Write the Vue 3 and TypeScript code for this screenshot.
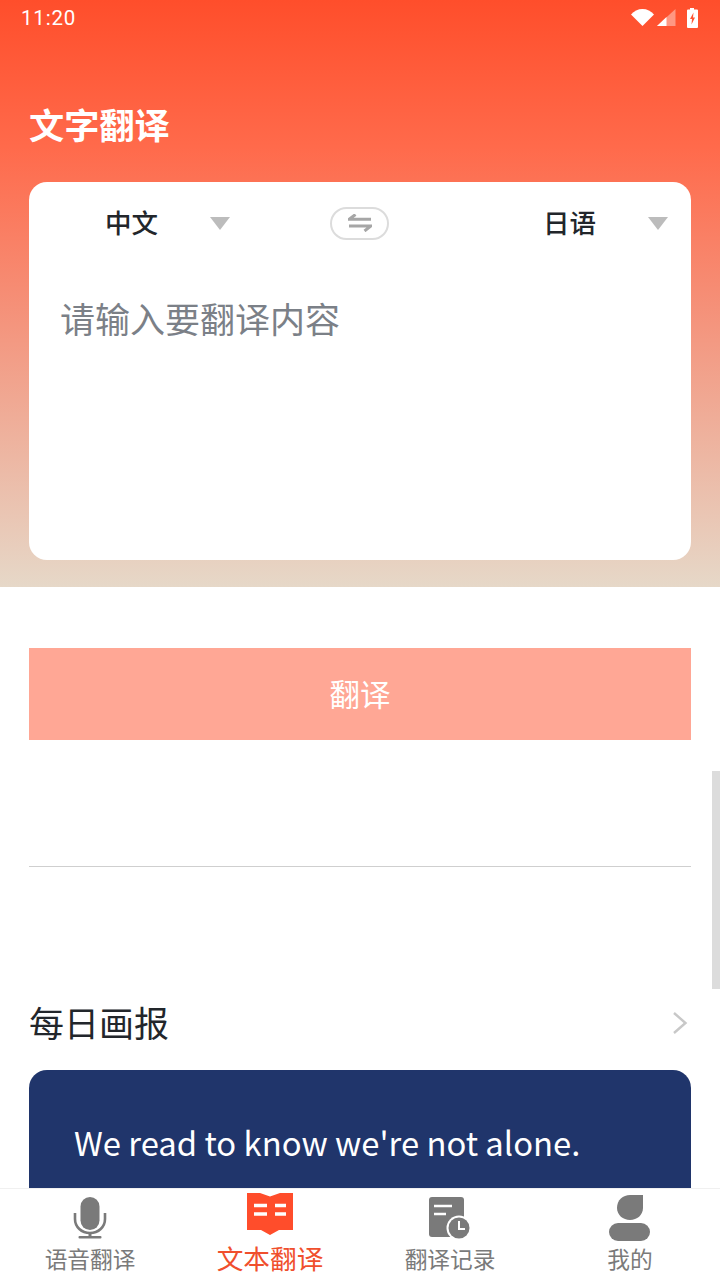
<template>
  <div class="page">
    <div class="hero">
      <div class="status-bar">
        <span class="time">11:20</span>
        <div class="status-icons">
          <svg width="26" height="20" viewBox="0 0 26 20"><path d="M1 6.500C4 3 8 1 12.500 1S21 3 24 6.500L12.500 18Z" fill="#fff" /></svg>
          <svg width="20" height="20" viewBox="0 0 20 20">
            <path d="M1 18 19.500 1V18Z" fill="#fff" opacity="0.4" />
            <path d="M1 18 10.500 9V18Z" fill="#fff" />
          </svg>
          <svg width="12" height="20" viewBox="0 0 12 20">
            <path d="M4 0h4v1.500h3a1 1 0 0 1 1 1V19a1 1 0 0 1-1 1H2a1 1 0 0 1-1-1V2.500a1 1 0 0 1 1-1h2Z" fill="#fff" />
            <path d="M7.500 4.500 4 11h2L5.500 16.500 9 9.500H7Z" fill="#ff5533" />
          </svg>
        </div>
      </div>
      <h1 class="title">文字翻译</h1>
      <div class="card">
        <div class="lang-row">
          <div class="lang lang-from">
            <span>中文</span>
            <i class="caret"></i>
          </div>
          <button class="swap">
            <svg width="24" height="18" viewBox="0 0 24 18" fill="none" stroke="#a6a6a6" stroke-width="3">
              <path d="M23 5.300H1L7.500 0.500" />
              <path d="M1 12H23L16.500 17" />
            </svg>
          </button>
          <div class="lang lang-to">
            <span>日语</span>
            <i class="caret"></i>
          </div>
        </div>
        <div class="placeholder">请输入要翻译内容</div>
      </div>
    </div>

    <div class="content">
      <button class="translate-btn"><span>翻译</span></button>
      <div class="divider"></div>
      <div class="section-head">
        <span>每日画报</span>
        <svg width="16" height="24" viewBox="0 0 16 24" fill="none" stroke="#c8c8c8" stroke-width="2.400"><path d="M2 2 13.500 12 2 22" /></svg>
      </div>
      <div class="banner">We read to know we're not alone.</div>
    </div>

    <nav class="tabs">
      <div v-for="tab in tabs" :key="tab.label" class="tab" :class="{ active: tab.active }">
        <svg v-if="tab.icon === 'mic'" width="48" height="48" viewBox="0 0 48 48">
          <rect x="14.500" y="3" width="19" height="33" rx="9.500" fill="#7a7a7a" />
          <path d="M9 19V25C9 33 15.500 39 24 39S39 33 39 25V19" fill="none" stroke="#7a7a7a" stroke-width="2.600" />
          <path d="M24 38V43" stroke="#7a7a7a" stroke-width="3" />
          <rect x="12.500" y="42" width="23" height="2.600" rx="1" fill="#7a7a7a" />
        </svg>
        <svg v-else-if="tab.icon === 'book'" class="book" width="48" height="44" viewBox="0 0 48 44">
          <path d="M1 1H14L24 4.500 34 1H47V38H33L24 43 15 38H1Z" fill="#ff4d2b" />
          <path d="M8 13.500H21M8 22H21M29 13.500H40M29 22H40" stroke="#fff" stroke-width="3.500" />
        </svg>
        <svg v-else-if="tab.icon === 'log'" width="48" height="48" viewBox="0 0 48 48">
          <rect x="3" y="3" width="35" height="40" rx="3" fill="#7a7a7a" />
          <path d="M8 12H26M8 20H20" stroke="#fff" stroke-width="2.500" />
          <circle cx="33" cy="34" r="12.500" fill="#fff" />
          <circle cx="33" cy="34" r="10.500" fill="#7a7a7a" />
          <path d="M33 27V35H39" fill="none" stroke="#fff" stroke-width="2" />
        </svg>
        <svg v-else width="48" height="48" viewBox="0 0 48 48">
          <path d="M37 1V14C37 21 31 26 24 26S11 21 11 14C11 6 17 1 24 1Z" fill="#7a7a7a" />
          <rect x="3" y="29" width="41" height="18" rx="9" fill="#7a7a7a" />
        </svg>
        <span class="tab-label">{{ tab.label }}</span>
      </div>
    </nav>

    <div class="scrollbar"></div>
  </div>
</template>

<script setup lang="ts">
const tabs = [
  { label: '语音翻译', icon: 'mic', active: false },
  { label: '文本翻译', icon: 'book', active: true },
  { label: '翻译记录', icon: 'log', active: false },
  { label: '我的', icon: 'user', active: false }
]
</script>

<style>
html,
body {
  margin: 0;
  background: #fff;
}
</style>

<style scoped>
.page {
  position: relative;
  width: 720px;
  height: 1280px;
  display: flex;
  flex-direction: column;
  overflow: hidden;
  background: #fff;
  font-family: "Noto Sans CJK SC", "Noto Sans", sans-serif;
}

.hero {
  flex: none;
  height: 587px;
  box-sizing: border-box;
  padding: 0 29px;
  background: linear-gradient(180deg, #ff4e2b 0%, #ff6a4b 25%, #f59078 52%, #e6d8c8 100%);
}

.status-bar {
  height: 36px;
  margin: 0 -29px;
  padding: 0 22px 0 21px;
  display: flex;
  align-items: center;
  justify-content: space-between;
}

.time {
  font-family: Roboto, sans-serif;
  font-size: 20.500px;
  color: #fff;
  letter-spacing: 0.8px;
}

.status-icons {
  display: flex;
  align-items: center;
}

.status-icons svg:last-child {
  margin-left: 10px;
}

.title {
  margin: 0;
  padding-top: 60px;
  height: 86px;
  font-size: 35.200px;
  line-height: 56px;
  font-weight: 700;
  color: #fff;
}

.card {
  height: 378px;
  box-sizing: border-box;
  background: #fff;
  border-radius: 18px;
}

.lang-row {
  display: grid;
  grid-template-columns: 1fr 58px 1fr;
  align-items: center;
  height: 84px;
}

.lang {
  display: flex;
  align-items: center;
  font-size: 26.500px;
  font-weight: 500;
  color: #22262b;
}

.lang span {
  margin-top: -6px;
}

.lang-from {
  padding-left: 76px;
}

.lang-from .caret {
  margin-left: 52px;
}

.lang-to {
  padding-left: 154px;
}

.lang-to .caret {
  margin-left: 52px;
}

.caret {
  width: 0;
  height: 0;
  margin-top: -2px;
  border-left: 10px solid transparent;
  border-right: 10px solid transparent;
  border-top: 13px solid #bcbcbc;
}

.swap {
  width: 59px;
  height: 33px;
  margin: -2px 0 0 -1px;
  padding: 0;
  display: flex;
  align-items: center;
  justify-content: center;
  background: #fff;
  border: 2px solid #dcdcdc;
  border-radius: 17px;
}

.placeholder {
  padding: 26px 31px 0;
  font-size: 35px;
  line-height: 52px;
  color: #7b8087;
}

.content {
  flex: 1;
  min-height: 0;
  padding: 61px 29px 0;
  overflow: hidden;
}

.translate-btn {
  display: block;
  width: 100%;
  height: 92px;
  padding: 0 0 2px;
  border: none;
  background: #ffa795;
  color: #fff;
  font-family: inherit;
  font-size: 30.500px;
}

.divider {
  height: 1px;
  margin-top: 126px;
  background: #cfcfcf;
}

.section-head {
  height: 60px;
  margin-top: 126px;
  display: flex;
  align-items: center;
  justify-content: space-between;
  padding-right: 3px;
  font-size: 35px;
  color: #22262b;
}

.section-head span {
  margin-top: -4px;
}

.banner {
  height: 160px;
  margin-top: 17px;
  padding: 48px 45px 0;
  box-sizing: border-box;
  background: #20356b;
  border-radius: 18px;
  color: #fff;
  font-size: 32.800px;
  line-height: 48px;
}

.tabs {
  flex: none;
  height: 92px;
  display: grid;
  grid-template-columns: repeat(4, 1fr);
  background: #fff;
  border-top: 1px solid #f0f0f0;
  box-sizing: border-box;
}

.tab {
  display: flex;
  flex-direction: column;
  align-items: center;
  justify-content: flex-start;
  padding-top: 5px;
  color: #7a7a7a;
}

.tab-label {
  font-size: 22.700px;
  line-height: 30px;
  margin-top: 2px;
}

.book {
  margin-top: -2px;
}

.tab.active {
  color: #f04f2d;
}

.tab.active .tab-label {
  font-size: 26.700px;
  line-height: 34px;
  margin-top: 5px;
}

.scrollbar {
  position: absolute;
  right: 0;
  top: 771px;
  width: 8px;
  height: 218px;
  background: #dcdcdc;
}
</style>
